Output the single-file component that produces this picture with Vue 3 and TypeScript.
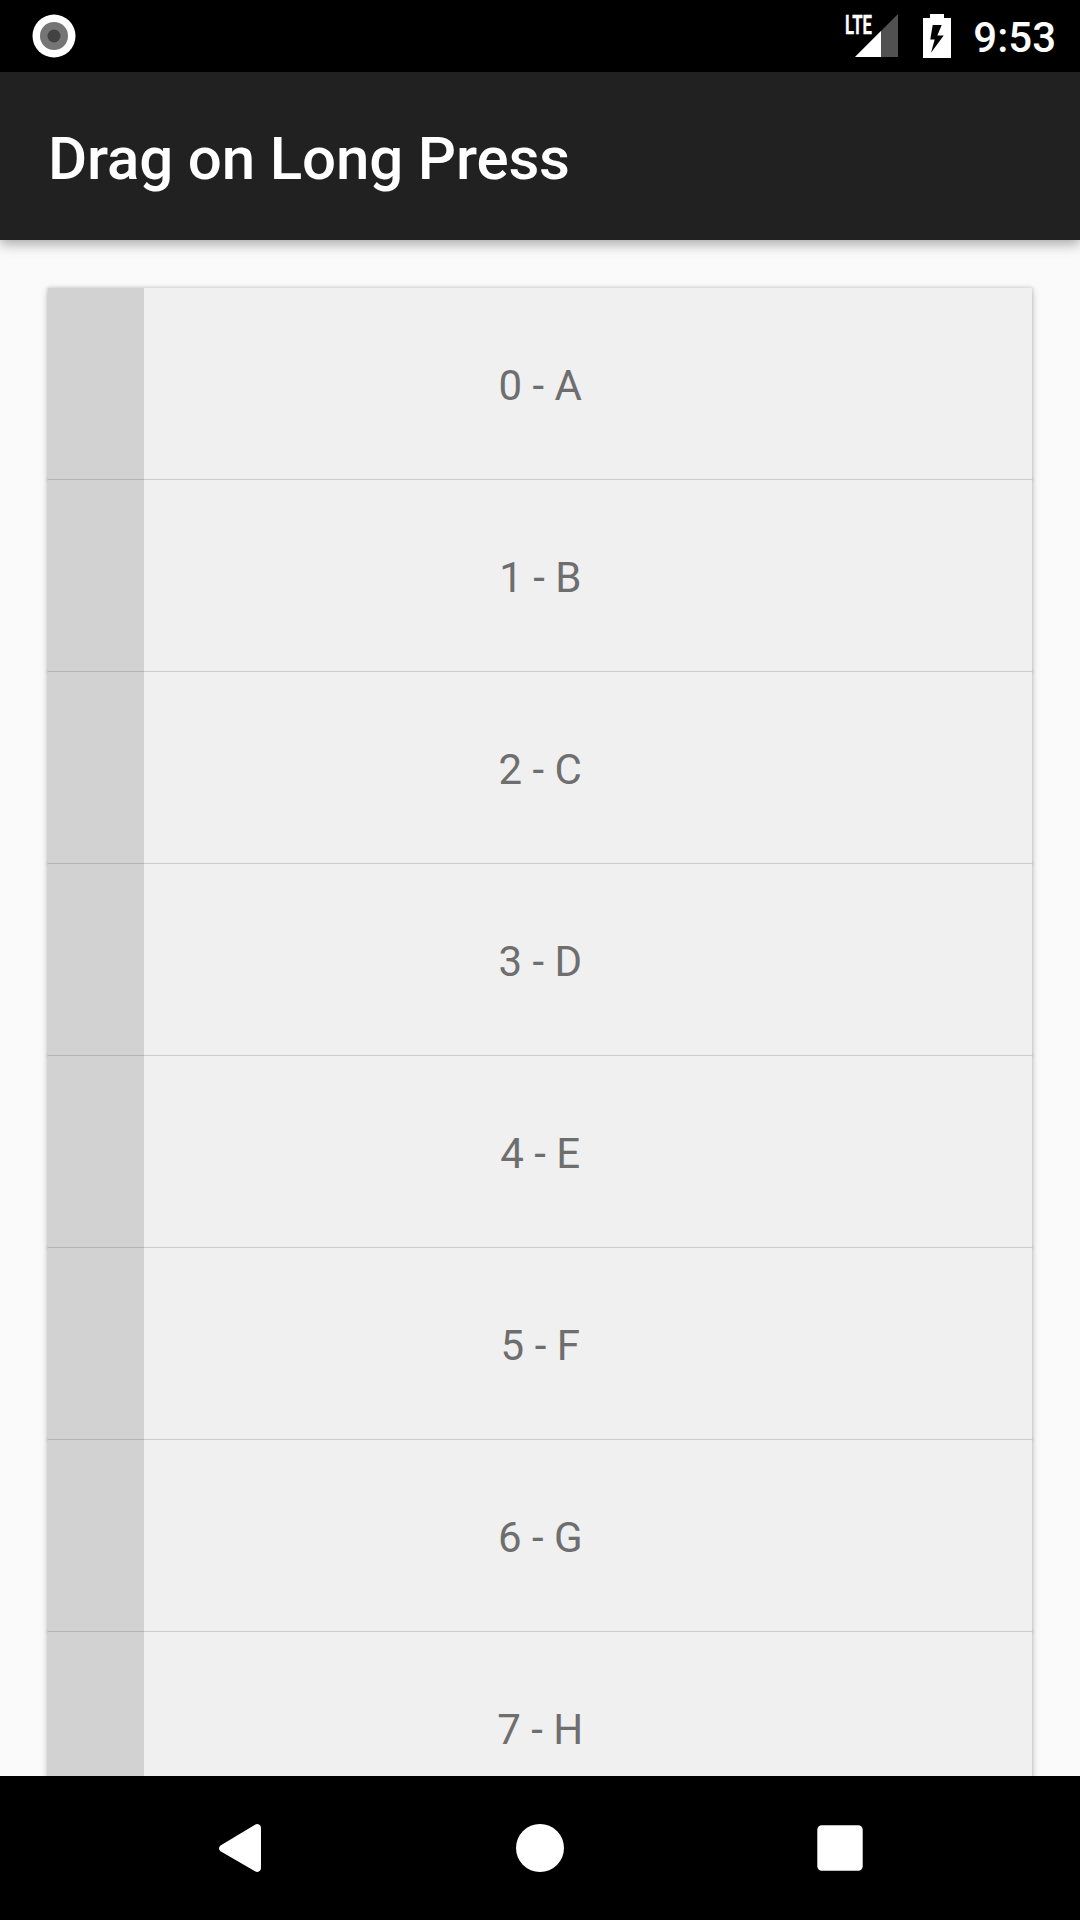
<script setup lang="ts">
const letters: string[] = ['A', 'B', 'C', 'D', 'E', 'F', 'G', 'H']
</script>

<template>
  <div class="screen">
    <header class="status">
      <svg class="record" width="44" height="44" viewBox="0 0 44 44">
        <circle cx="22" cy="22" r="21.5" fill="#fff" />
        <circle cx="22" cy="22" r="14" fill="#757575" />
        <circle cx="22" cy="22" r="6.5" fill="#424242" />
      </svg>
      <svg class="signal" width="54" height="44" viewBox="0 0 54 44">
        <path d="M10 43L53 0V43Z" fill="#515151" />
        <path d="M10 43L36 17V43Z" fill="#fff" />
        <text x="0" y="19.5" textLength="27" lengthAdjust="spacingAndGlyphs" class="lte">LTE</text>
      </svg>
      <svg class="battery" width="28" height="44" viewBox="0 0 28 44">
        <path fill="#fff" fill-rule="evenodd" d="M7 0H21V4H28V44H0V4H7ZM9.7 11L7.3 25.5H11.7L8 38.7L20.7 21.5H14.3L18.7 11Z" />
      </svg>
      <span class="time">9:53</span>
    </header>
    <div class="appbar"><h1>Drag on Long Press</h1></div>
    <main class="list">
      <div v-for="(letter, i) in letters" :key="letter" class="row">
        <div class="handle"></div>
        <span class="label">{{ i }} - {{ letter }}</span>
      </div>
    </main>
    <nav class="nav">
      <svg width="48" height="48" viewBox="-3 0 48 48">
        <path fill="#fff" d="M1.5 21.5L36 .7Q38 -.5 40 .5Q42 1.4 42 4V44Q42 46.6 40 47.5Q38 48.5 36 47.3L1.5 27.2Q0 26.2 0 24.4Q0 22.5 1.5 21.5Z" />
      </svg>
      <svg width="48" height="48" viewBox="0 0 48 48"><circle cx="24" cy="24" r="24" fill="#fff" /></svg>
      <svg width="48" height="48" viewBox="0 0 48 48"><rect x="1.3" y="1.3" width="45.4" height="45.4" rx="4.5" fill="#fff" /></svg>
    </nav>
  </div>
</template>

<style>
body {
  margin: 0;
  background: #000;
}
</style>

<style scoped>
.screen {
  width: 1080px;
  height: 1920px;
  display: flex;
  flex-direction: column;
  overflow: hidden;
  background: #fafafa;
  font-family: Roboto, "Liberation Sans", sans-serif;
}
.status {
  height: 72px;
  flex: none;
  box-sizing: border-box;
  padding: 0 24px 0 32px;
  display: flex;
  align-items: flex-start;
  background: #000;
}
.status svg {
  margin-top: 14px;
  flex: none;
  overflow: visible;
}
.signal {
  margin-left: auto;
  margin-right: 24px;
}
.battery {
  margin-right: 22px;
}
.lte {
  font-size: 26px;
  font-weight: 700;
  fill: #fff;
  stroke: #fff;
  stroke-width: 0.3px;
}
.time {
  color: #fff;
  font-size: 42px;
  font-weight: 500;
  line-height: 76px;
}
.appbar {
  height: 168px;
  flex: none;
  box-sizing: border-box;
  padding-left: 48px;
  display: flex;
  align-items: center;
  background: #212121;
  position: relative;
  z-index: 1;
  box-shadow: 0 4px 12px rgba(0, 0, 0, 0.34);
}
h1 {
  margin: 0;
  padding-top: 4px;
  color: #fff;
  font-size: 60px;
  font-weight: 500;
  letter-spacing: -0.15px;
}
.list {
  flex: 1;
  min-height: 0;
  overflow: hidden;
  isolation: isolate;
  padding: 48px 48px 0;
}
.row {
  height: 192px;
  position: relative;
  display: flex;
  background: #f0f0f0;
}
.row::before {
  content: "";
  position: absolute;
  inset: 0;
  z-index: -1;
  box-shadow: 0 0 3px 1px rgba(0, 0, 0, 0.12), 0 3px 8px rgba(0, 0, 0, 0.2);
}
.row::after {
  content: "";
  position: absolute;
  left: 0;
  right: 0;
  bottom: 0;
  height: 1px;
  background: rgba(0, 0, 0, 0.14);
}
.handle {
  width: 96px;
  background: #d2d2d2;
}
.label {
  flex: 1;
  margin-right: 95.5px;
  padding-top: 2px;
  line-height: 192px;
  text-align: center;
  color: #6e6e6e;
  font-size: 42px;
}
.nav {
  height: 144px;
  flex: none;
  box-sizing: border-box;
  padding: 0 216px;
  display: flex;
  align-items: center;
  justify-content: space-between;
  background: #000;
}
</style>
